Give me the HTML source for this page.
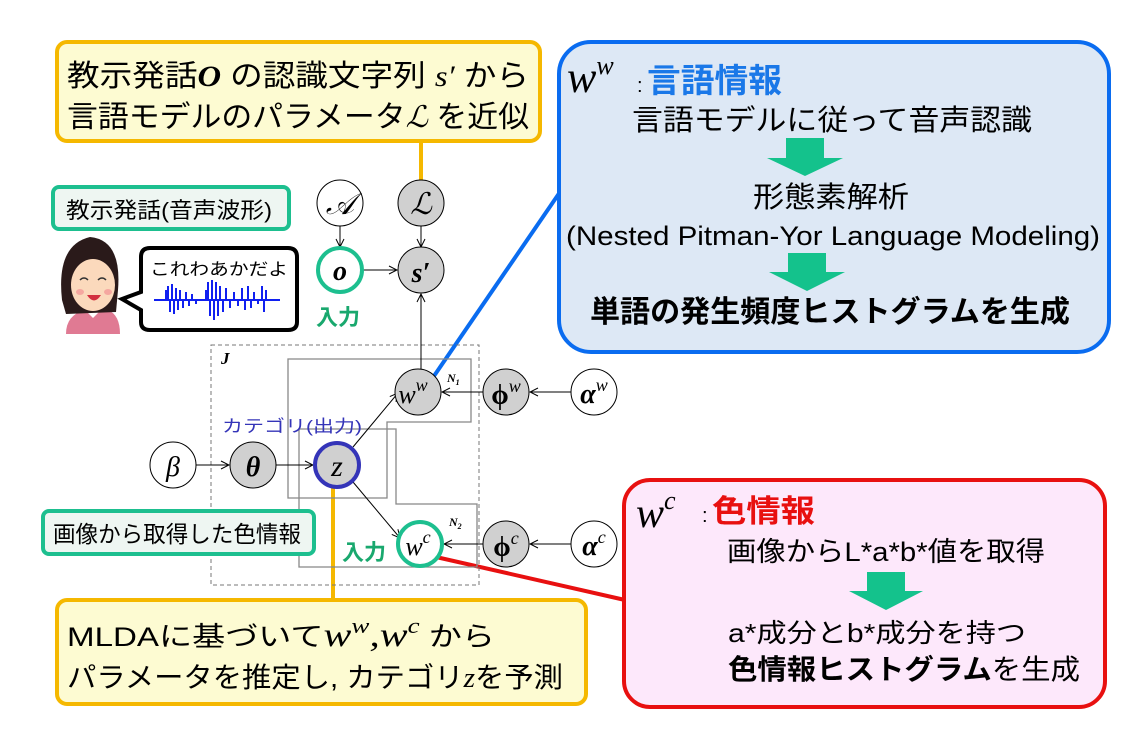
<!DOCTYPE html>
<html><head><meta charset="utf-8"><style>
html,body{margin:0;padding:0;background:#fff;width:1134px;height:756px;overflow:hidden}
svg{display:block}
.jp{font-family:"Liberation Sans","Noto Sans CJK JP",sans-serif}
.m{font-family:"Liberation Serif","DejaVu Serif",serif;font-style:italic}
</style></head><body>
<svg width="1134" height="756" viewBox="0 0 1134 756" xmlns="http://www.w3.org/2000/svg">
<defs>
<marker id="ar" markerWidth="10" markerHeight="10" refX="9" refY="5" orient="auto" markerUnits="userSpaceOnUse">
<path d="M1,1 L9,5 L1,9" fill="none" stroke="#000" stroke-width="1"/></marker>
</defs>

<line x1="421" y1="142" x2="421" y2="182" stroke="#f5b800" stroke-width="4"/>
<line x1="333" y1="488" x2="333" y2="600" stroke="#f5b800" stroke-width="4"/>
<line x1="434" y1="376" x2="560" y2="192" stroke="#0a6cf0" stroke-width="4"/>
<line x1="436" y1="557" x2="625" y2="600" stroke="#e81010" stroke-width="4"/>

<rect x="211" y="345" width="268" height="240" fill="none" stroke="#777" stroke-width="1" stroke-dasharray="4,3"/>
<text x="221" y="364" class="m" font-size="17" font-weight="bold">J</text>
<path d="M288,359 H471 V422 H387 V498 H288 Z" fill="none" stroke="#888" stroke-width="1.3"/>
<path d="M299,429 H396 V504 H477 V567 H299 Z" fill="none" stroke="#888" stroke-width="1.3"/>
<text x="447" y="382" class="m" font-size="12" font-weight="bold">N<tspan font-size="8" dy="3">1</tspan></text>
<text x="449" y="526" class="m" font-size="12" font-weight="bold">N<tspan font-size="8" dy="3">2</tspan></text>

<g stroke="#000" stroke-width="1" marker-end="url(#ar)">
<line x1="340" y1="226" x2="340" y2="247"/>
<line x1="421" y1="226" x2="421" y2="247"/>
<line x1="363" y1="270" x2="397" y2="270"/>
<line x1="421" y1="369" x2="421" y2="294"/>
<line x1="196" y1="465" x2="229" y2="465"/>
<line x1="276" y1="465" x2="313" y2="465"/>
<line x1="353" y1="447" x2="398" y2="393"/>
<line x1="353" y1="482" x2="400" y2="538"/>
<line x1="483" y1="392" x2="442" y2="392"/>
<line x1="571" y1="392" x2="530" y2="392"/>
<line x1="483" y1="544" x2="444" y2="544"/>
<line x1="571" y1="544" x2="530" y2="544"/>
</g>

<g stroke="#000" stroke-width="1">
<circle cx="340" cy="203" r="23" fill="#fff"/>
<circle cx="421" cy="203" r="23" fill="#d0d0d0"/>
<circle cx="421" cy="270" r="23" fill="#d0d0d0"/>
<circle cx="173" cy="465" r="23" fill="#fff"/>
<circle cx="253" cy="465" r="23" fill="#d0d0d0"/>
<circle cx="418" cy="392" r="23" fill="#d0d0d0"/>
<circle cx="506" cy="392" r="23" fill="#d0d0d0"/>
<circle cx="594" cy="392" r="23" fill="#fff"/>
<circle cx="506" cy="544" r="23" fill="#d0d0d0"/>
<circle cx="594" cy="544" r="23" fill="#fff"/>
</g>
<circle cx="340" cy="270" r="22" fill="#fff" stroke="#1dbf8f" stroke-width="4"/>
<circle cx="420" cy="544" r="22" fill="#fff" stroke="#1dbf8f" stroke-width="4"/>
<circle cx="337" cy="465" r="22" fill="#d0d0d0" stroke="#3434b8" stroke-width="4"/>

<g class="m" text-anchor="middle">
<text x="340" y="214" font-size="30" font-family="DejaVu Serif,serif">𝒜</text>
<text x="421" y="214" font-size="30" font-family="DejaVu Serif,serif">ℒ</text>
<text x="340" y="280" font-size="28" font-weight="bold">o</text>
<text x="421" y="282" font-size="28" font-weight="bold">s′</text>
<text x="173" y="476" font-size="28">β</text>
<text x="253" y="476" font-size="28" font-weight="bold">θ</text>
<text x="337" y="476" font-size="30">z</text>
<text x="413" y="403" font-size="26">w<tspan font-size="18" dy="-12">w</tspan></text>
<text x="506" y="404" font-size="28" font-weight="bold" font-style="normal">ϕ<tspan font-size="18" dy="-12" font-style="italic" font-weight="normal">w</tspan></text>
<text x="594" y="403" font-size="28" font-weight="bold">α<tspan font-size="18" dy="-12" font-weight="normal">w</tspan></text>
<text x="418" y="555" font-size="26">w<tspan font-size="18" dy="-12">c</tspan></text>
<text x="506" y="556" font-size="28" font-weight="bold" font-style="normal">ϕ<tspan font-size="18" dy="-12" font-style="italic" font-weight="normal">c</tspan></text>
<text x="594" y="555" font-size="28" font-weight="bold">α<tspan font-size="18" dy="-12" font-weight="normal">c</tspan></text>
</g>

<g class="jp" font-weight="bold" fill="#19a86e" font-size="22">
<text x="316" y="325">入力</text>
<text x="342" y="560">入力</text>
</g>
<text x="222" y="432" class="jp" fill="#3434b8" font-size="17" textLength="140" lengthAdjust="spacingAndGlyphs">カテゴリ(出力)</text>

<rect x="57" y="42" width="483" height="99" rx="10" fill="#fdfbd2" stroke="#f5b800" stroke-width="4"/>
<text x="67" y="86" class="jp" font-size="30" textLength="462" lengthAdjust="spacingAndGlyphs">教示発話<tspan class="m" font-weight="bold">O</tspan> の認識文字列 <tspan class="m">s′</tspan> から</text>
<text x="67" y="127" class="jp" font-size="30" textLength="462" lengthAdjust="spacingAndGlyphs">言語モデルのパラメータ<tspan class="m" font-family="DejaVu Serif,serif">ℒ</tspan> を近似</text>

<rect x="559" y="42" width="550" height="310" rx="32" fill="#dde8f5" stroke="#0a6cf0" stroke-width="4"/>
<text x="567" y="92" class="m" font-size="44">w<tspan font-size="26" dy="-18">w</tspan></text>
<text x="637" y="92" class="jp" font-size="20">:</text>
<text x="647" y="92" class="jp" font-size="33" font-weight="bold" fill="#1a78e8" textLength="135" lengthAdjust="spacingAndGlyphs">言語情報</text>
<g class="jp" fill="#000">
<text x="632" y="130" font-size="29" textLength="400" lengthAdjust="spacingAndGlyphs">言語モデルに従って音声認識</text>
<text x="753" y="207" font-size="29" textLength="156" lengthAdjust="spacingAndGlyphs">形態素解析</text>
<text x="566" y="245" font-size="27" textLength="534" lengthAdjust="spacingAndGlyphs">(Nested Pitman-Yor Language Modeling)</text>
<text x="590" y="322" font-size="30" font-weight="bold" textLength="480" lengthAdjust="spacingAndGlyphs">単語の発生頻度ヒストグラムを生成</text>
</g>
<path d="M786,138 H824 V158 H843 L805,176 L767,158 H786 Z" fill="#14c28c"/>
<path d="M788,253 H826 V272 H845 L807,291 L769,272 H788 Z" fill="#14c28c"/>

<rect x="624" y="480" width="481" height="227" rx="26" fill="#fde8fb" stroke="#e81010" stroke-width="4"/>
<text x="636" y="527" class="m" font-size="42">w<tspan font-size="26" dy="-18">c</tspan></text>
<text x="702" y="522" class="jp" font-size="20">:</text>
<text x="712" y="522" class="jp" font-size="31" font-weight="bold" fill="#e81010" textLength="103" lengthAdjust="spacingAndGlyphs">色情報</text>
<g class="jp" fill="#000">
<text x="727" y="561" font-size="27" textLength="318" lengthAdjust="spacingAndGlyphs">画像からL*a*b*値を取得</text>
<text x="728" y="642" font-size="26" textLength="298" lengthAdjust="spacingAndGlyphs">a*成分とb*成分を持つ</text>
<text x="728" y="679" font-size="28" font-weight="bold" textLength="352" lengthAdjust="spacingAndGlyphs">色情報ヒストグラム<tspan font-weight="normal">を生成</tspan></text>
</g>
<path d="M867,572 H905 V591 H923 L886,610 L849,591 H867 Z" fill="#14c28c"/>

<rect x="57" y="600" width="529" height="104" rx="10" fill="#fdfbd2" stroke="#f5b800" stroke-width="4"/>
<text x="67" y="646" class="jp" font-size="27" textLength="428" lengthAdjust="spacingAndGlyphs">MLDAに基づいて<tspan class="m" font-size="34">w<tspan font-size="22" dy="-13">w</tspan><tspan dy="13">,w</tspan><tspan font-size="22" dy="-13">c</tspan></tspan><tspan dy="13"> から</tspan></text>
<text x="67" y="687" class="jp" font-size="28" textLength="496" lengthAdjust="spacingAndGlyphs">パラメータを推定し, カテゴリ<tspan class="m">z</tspan>を予測</text>

<rect x="53" y="187" width="236" height="42" rx="6" fill="#eef6f2" stroke="#1dbf8f" stroke-width="4"/>
<text x="66" y="218" class="jp" font-size="22" textLength="206" lengthAdjust="spacingAndGlyphs">教示発話(音声波形)</text>
<rect x="43" y="511" width="271" height="43" rx="6" fill="#eef6f2" stroke="#1dbf8f" stroke-width="4"/>
<text x="53" y="542" class="jp" font-size="23" textLength="248" lengthAdjust="spacingAndGlyphs">画像から取得した色情報</text>

<path d="M150,248 H288 Q297,248 297,257 V322 Q297,330 288,330 H150 Q141,330 141,322 V310 L122,299 L141,292 V257 Q141,248 150,248 Z" fill="#fff" stroke="#000" stroke-width="4"/>
<text x="150" y="275" class="jp" font-size="17" textLength="138" lengthAdjust="spacingAndGlyphs">これわあかだよ</text>
<g stroke="#1020f0" stroke-width="2">
<line x1="154" y1="300" x2="280" y2="300"/>
<path d="M166,300 V290 M168,300 V286 M170,300 V312 M172,300 V284 M174,300 V314 M176,300 V288 M178,300 V310 M180,300 V290 M183,300 V308 M186,300 V292 M189,300 V306 M192,300 V294 M196,300 V304 M206,300 V290 M208,300 V282 M210,300 V316 M212,300 V280 M214,300 V320 M216,300 V282 M218,300 V316 M220,300 V286 M223,300 V312 M226,300 V288 M230,300 V308 M234,300 V292 M238,300 V306 M242,300 V288 M245,300 V310 M248,300 V286 M251,300 V308 M254,300 V292 M258,300 V304 M262,300 V286 M264,300 V312 M266,300 V290"/>
</g>

<path d="M66,334 Q66,315 85,310 L108,310 Q120,315 120,334 Z" fill="#e07a93"/>
<path d="M85,310 L93,318 L101,310 Z" fill="#fff"/>
<path d="M62,300 Q56,245 90,237 Q122,240 118,290 L116,312 L66,314 Z" fill="#2a1a1a"/>
<ellipse cx="93" cy="285" rx="22" ry="26" fill="#fbd9bc"/>
<path d="M72,262 Q90,250 114,266 Q110,250 92,249 Q74,252 72,262 Z" fill="#2a1a1a"/>
<path d="M80,280 q4,-4 8,0 M98,280 q4,-4 8,0" fill="none" stroke="#333" stroke-width="1.5"/>
<path d="M87,295 Q94,306 101,295 Z" fill="#d23040"/>
<ellipse cx="80" cy="292" rx="4" ry="3" fill="#f5a7a0"/>
<ellipse cx="108" cy="292" rx="4" ry="3" fill="#f5a7a0"/>
</svg>
</body></html>
